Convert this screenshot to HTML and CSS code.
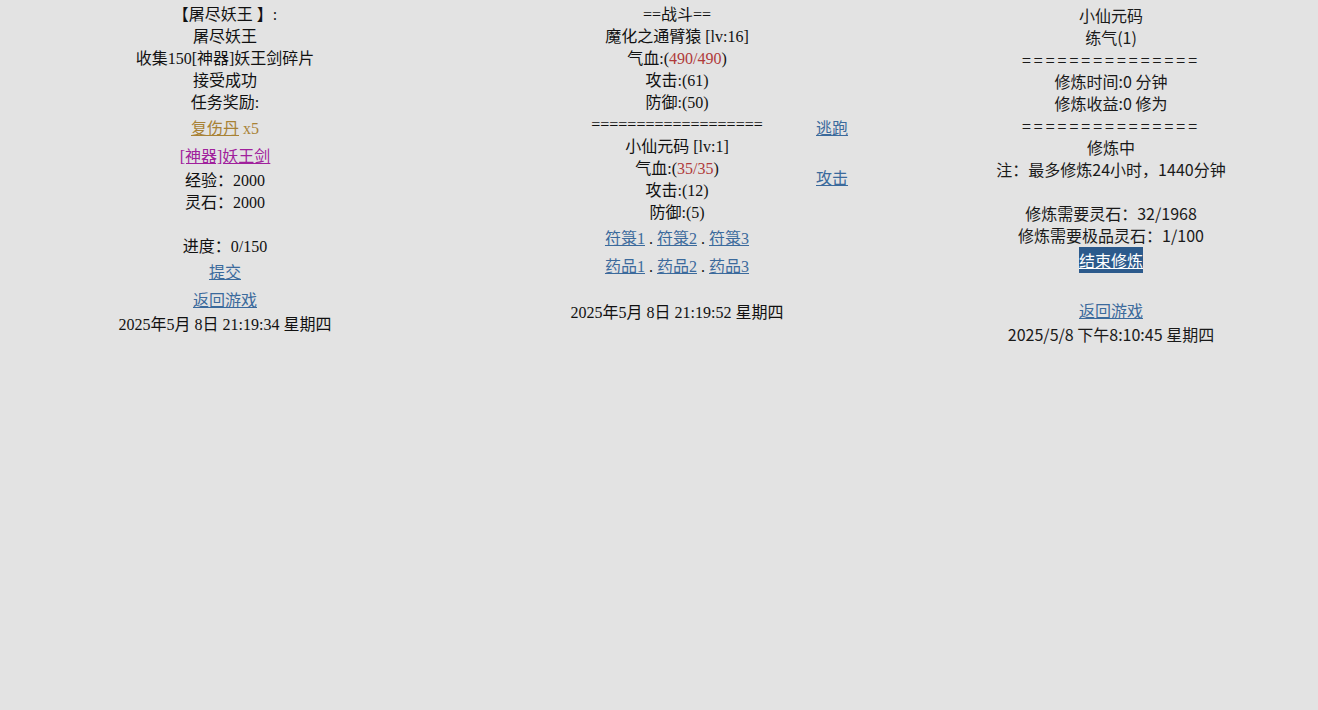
FILE: index.html
```html
<!DOCTYPE html>
<html lang="zh">
<head>
<meta charset="utf-8">
<title>游戏</title>
<link rel="stylesheet" href="styles.css">
</head>
<body>
<div class="page">
  <section class="col col-left">
    <div class="line">【屠尽妖王 】:</div>
    <div class="line">屠尽妖王</div>
    <div class="line">收集150[神器]妖王剑碎片</div>
    <div class="line">接受成功</div>
    <div class="line">任务奖励:</div>
    <div class="link-row"><a class="gold" href="#">复伤丹</a><span class="gold-text"> x5</span></div>
    <div class="link-row"><a class="purple" href="#">[神器]妖王剑</a></div>
    <div class="line">经验：2000</div>
    <div class="line">灵石：2000</div>
    <div class="line blank"></div>
    <div class="line">进度：0/150</div>
    <div class="link-row"><a href="#">提交</a></div>
    <div class="link-row"><a href="#">返回游戏</a></div>
    <div class="line">2025年5月 8日 21:19:34 星期四</div>
  </section>

  <section class="col col-mid">
    <div class="battle">
      <div class="line">==战斗==</div>
      <div class="line">魔化之通臂猿 [lv:16]</div>
      <div class="line">气血:(<span class="hp">490/490</span>)</div>
      <div class="line">攻击:(61)</div>
      <div class="line">防御:(50)</div>
      <div class="line">===================</div>
      <div class="line">小仙元码 [lv:1]</div>
      <div class="line">气血:(<span class="hp">35/35</span>)</div>
      <div class="line">攻击:(12)</div>
      <div class="line">防御:(5)</div>
      <div class="link-row"><a href="#">符箓1</a> . <a href="#">符箓2</a> . <a href="#">符箓3</a></div>
      <div class="link-row"><a href="#">药品1</a> . <a href="#">药品2</a> . <a href="#">药品3</a></div>
      <div class="line blank"></div>
      <div class="line">2025年5月 8日 21:19:52 星期四</div>
    </div>
    <div class="actions">
      <a href="#">逃跑</a>
      <a href="#">攻击</a>
    </div>
  </section>

  <section class="col col-right">
    <div class="line">小仙元码</div>
    <div class="line">练气(1)</div>
    <div class="line eq">===============</div>
    <div class="line">修炼时间:0 分钟</div>
    <div class="line">修炼收益:0 修为</div>
    <div class="line eq">===============</div>
    <div class="line">修炼中</div>
    <div class="line">注：最多修炼24小时，1440分钟</div>
    <div class="line blank"></div>
    <div class="line">修炼需要灵石：32/1968</div>
    <div class="line">修炼需要极品灵石：1/100</div>
    <div class="stop-row"><a class="stop" href="#">结束修炼</a></div>
    <div class="line blank"></div>
    <div class="back-row"><a href="#">返回游戏</a></div>
    <div class="line">2025/5/8 下午8:10:45 星期四</div>
  </section>
</div>
</body>
</html>
```

FILE: styles.css
```css
html, body {
  margin: 0;
  padding: 0;
  background: #e3e3e3;
}

body {
  color: #111;
  font-family: "Liberation Serif", "Noto Sans CJK SC", serif;
  font-size: 16px;
}

.page {
  display: grid;
  grid-template-columns: 450px 454px 1fr;
  align-items: start;
}

.col {
  text-align: center;
}

.line {
  height: 22px;
  line-height: 22px;
  white-space: nowrap;
}

.link-row {
  line-height: 22px;
  height: 22px;
  padding: 4px 0 2px;
  white-space: nowrap;
}

a {
  color: #3b6a9c;
  text-decoration: underline;
}

.gold {
  color: #a88235;
}

.gold-text {
  color: #a88235;
}

.purple {
  color: #a0209c;
}

.hp {
  color: #b03a3a;
}

.col-left {
  padding-top: 4px;
}

.col-mid {
  display: grid;
  grid-template-columns: 274px auto;
  padding-left: 90px;
  padding-top: 4px;
}

.actions {
  display: flex;
  flex-direction: column;
  align-items: flex-start;
  gap: 28px;
  padding-top: 112px;
  padding-left: 2px;
  line-height: 22px;
  font-family: "Noto Sans CJK SC", sans-serif;
}

.col-right {
  padding-top: 4px;
  font-family: "Noto Sans CJK SC", sans-serif;
  color: #1a1a1a;
}

.col-right .eq {
  letter-spacing: 3px;
}

.stop-row {
  margin-top: 3px;
  height: 22px;
  line-height: 22px;
}

.stop {
  background: #2c5a8c;
  color: #ffffff;
  padding: 1px 0;
}

.back-row {
  padding: 6px 0 2px;
  height: 22px;
  line-height: 22px;
}
```
